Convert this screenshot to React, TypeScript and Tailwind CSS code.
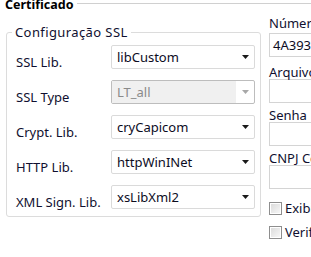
import { ReactNode } from "react";

const font = { fontFamily: '"Noto Sans", "Open Sans", sans-serif' };

interface ComboProps {
  value: string;
  disabled?: boolean;
}

const Combo = ({ value, disabled }: ComboProps) => {
  if (disabled) {
    return (
      <div className="w-[144px] h-[24px] flex border border-[#bdbdbd] rounded-[2px] bg-white">
        <div className="flex-1 bg-[#f0f0f0] flex items-center pl-[5px] text-[#8a8a8a]">{value}</div>
        <div className="w-[18px] flex items-center justify-center">
          <svg width="7" height="4" viewBox="0 0 7 4">
            <path d="M0 0h7L3.5 4z" fill="#a8a8a8" />
          </svg>
        </div>
      </div>
    );
  }
  return (
    <div className="w-[144px] h-[24px] flex border border-[#dadada] rounded-[2px] bg-white">
      <div className="flex-1 flex items-center pl-[5px] text-[#0c0c1e]">{value}</div>
      <div className="w-[18px] flex items-center justify-center">
        <svg width="7" height="4" viewBox="0 0 7 4">
          <path d="M0 0h7L3.5 4z" fill="#1a1a1a" />
        </svg>
      </div>
    </div>
  );
};

const Row = ({ label, children }: { label: string; children: ReactNode }) => (
  <div className="flex items-start h-[24px]">
    <span className="w-[95px] pt-[9px] text-[#101030] whitespace-nowrap">{label}</span>
    {children}
  </div>
);

const Field = ({ label, value, className, gap }: { label: string; value?: string; className?: string; gap?: string }) => (
  <div className={className}>
    <div className={`h-[14px] leading-[14px] text-[#101030] whitespace-nowrap ${gap ?? ""}`}>{label}</div>
    <div className="w-[60px] h-[24px] border border-[#d4d4d4] bg-white flex items-center pl-[3px] whitespace-nowrap overflow-hidden text-[#0c0c1e]">
      {value}
    </div>
  </div>
);

const Check = ({ label }: { label: string }) => (
  <div className="flex items-center gap-[3px] h-[16px]">
    <div className="w-[13px] h-[13px] border border-[#8e8e8e] p-[1px] bg-white">
      <div className="w-full h-full bg-gradient-to-br from-[#dcdcdc] to-[#f6f6f6]" />
    </div>
    <span className="text-[#101030] whitespace-nowrap">{label}</span>
  </div>
);

export default function App() {
  return (
    <div className="w-[311px] h-[257px] bg-white overflow-hidden text-[13px] leading-[16px]" style={font}>
      {/* Certificado header */}
      <div className="flex h-[14px]">
        <span className="pl-[5px] pr-[4px] text-[12.5px] font-bold leading-[14px] -mt-[2px] text-black">Certificado</span>
        <div className="flex-1 mt-[3px] border-t border-[#d0d0d0]" />
      </div>

      <div className="flex items-start">
        {/* Configuração SSL */}
        <div className="relative ml-[6px] mt-[18px] w-[255px] border border-[#dcdcdc] rounded-[3px] pl-[9px] pr-[5px] pt-[12px] pb-[7px]">
          <span className="absolute -top-[9px] left-[5px] px-[3px] bg-white text-[#101030] tracking-[0.4px] whitespace-nowrap">
            Configuração SSL
          </span>
          <div className="flex flex-col gap-[11px]">
            <Row label="SSL Lib.">
              <Combo value="libCustom" />
            </Row>
            <Row label="SSL Type">
              <Combo value="LT_all" disabled />
            </Row>
            <Row label="Crypt. Lib.">
              <Combo value="cryCapicom" />
            </Row>
            <Row label="HTTP Lib.">
              <Combo value="httpWinINet" />
            </Row>
            <Row label="XML Sign. Lib.">
              <Combo value="xsLibXml2" />
            </Row>
          </div>
        </div>

        {/* right column */}
        <div className="ml-[8px] mt-[2px] flex flex-col">
          <Field label="Número" value="4A3937A1" className="mb-[8px]" gap="mb-[3px]" />
          <Field label="Arquivo" className="mb-[5px]" />
          <Field label="Senha" className="mb-[5px]" />
          <Field label="CNPJ Certificado" className="mb-[11px]" />
          <div className="flex flex-col gap-[8px]">
            <Check label="Exibir" />
            <Check label="Verificar" />
          </div>
        </div>
      </div>
    </div>
  );
}
